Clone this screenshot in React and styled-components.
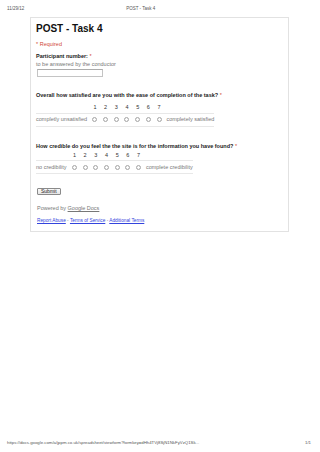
import React from "react";
import styled, { createGlobalStyle } from "styled-components";

const GlobalStyle = createGlobalStyle`
  html, body {
    margin: 0;
    padding: 0;
    background: #fff;
  }
  body {
    font-family: "Liberation Sans", Arial, sans-serif;
  }
`;

const Page = styled.div`
  width: 320px;
  height: 452px;
  display: flex;
  flex-direction: column;
  background: #fff;
  overflow: hidden;
`;

const PrintBar = styled.div`
  display: flex;
  align-items: center;
  height: 17px;
  padding: 0 7px;
  font-size: 4.5px;
  color: #555;
  white-space: nowrap;
`;

const PrintTitle = styled.span`
  margin-left: 102px;
`;

const PrintFooter = styled.div`
  margin-top: auto;
  display: flex;
  justify-content: space-between;
  align-items: center;
  height: 8px;
  padding: 0 9px 6px 7px;
  font-size: 4.3px;
  color: #555;
  white-space: nowrap;
`;

const Card = styled.div`
  box-sizing: border-box;
  width: 259px;
  margin-left: 30px;
  border: 1px solid #e2e2e2;
  padding: 5px 5px 7px 5px;
  color: #222;
  font-size: 5.5px;
  line-height: 7px;
`;

const Title = styled.h1`
  margin: 0;
  font-size: 10px;
  line-height: 12px;
  font-weight: bold;
  color: #111;
`;

const Required = styled.div`
  margin-top: 6px;
  color: #d14836;
`;

const Star = styled.span`
  color: #d14836;
  font-weight: normal;
`;

const Label = styled.div`
  margin-top: ${(p) => p.$top || 0}px;
  font-weight: bold;
  color: #222;
  white-space: nowrap;
`;

const Help = styled.div`
  margin-top: 1px;
  color: #777;
`;

const TextBox = styled.div`
  box-sizing: border-box;
  width: 66px;
  height: 8px;
  margin: 1px 0 0 1px;
  border: 1px solid #c4c4c4;
  border-top-color: #acacac;
`;

const Scale = styled.table`
  margin-top: ${(p) => p.$top}px;
  border-collapse: collapse;
  font-size: 5.5px;
  line-height: 7px;
  color: #777;
  white-space: nowrap;
`;

const NumberCell = styled.th`
  width: 10.7px;
  padding: 0 0 1.5px 0;
  text-align: center;
  font-weight: normal;
  color: #333;
`;

const RowCell = styled.td`
  height: 12px;
  padding: 0;
  border-top: 1px solid #e8e8e8;
  border-bottom: 1px solid #e8e8e8;
  vertical-align: middle;
  text-align: ${(p) => p.$align || "left"};
  padding-left: ${(p) => p.$padLeft || 0}px;
  padding-right: ${(p) => p.$padRight || 0}px;
`;

const Radio = styled.span`
  display: inline-block;
  box-sizing: border-box;
  width: 5px;
  height: 5px;
  border-radius: 50%;
  border: 0.7px solid #a8a8a8;
  background: radial-gradient(circle, #ffffff 0 45%, #e6e6e6 60%, #f6f6f6 80%);
  vertical-align: middle;
`;

const SubmitButton = styled.button`
  display: block;
  box-sizing: border-box;
  height: 7px;
  margin: 14px 0 0 1px;
  padding: 0 3px;
  border: 1px solid #8a8a8a;
  border-radius: 1px;
  background: linear-gradient(#fafafa, #e4e4e4);
  font-family: "Liberation Sans", Arial, sans-serif;
  font-size: 5px;
  line-height: 5px;
  color: #222;
`;

const Powered = styled.div`
  margin: 10px 0 0 1px;
  color: #777;
`;

const GreyLink = styled.a`
  color: #777;
  text-decoration: underline;
`;

const Links = styled.div`
  margin: 5px 0 0 1px;
  font-size: 4.75px;
  color: #777;
  white-space: nowrap;
`;

const BlueLink = styled.a`
  color: #3344dd;
  text-decoration: underline;
`;

const steps = [1, 2, 3, 4, 5, 6, 7];

const ScaleQuestion = ({ question, low, high, titleTop, numbersTop }) => (
  <>
    <Label $top={titleTop}>
      {question} <Star>*</Star>
    </Label>
    <Scale $top={numbersTop}>
      <thead>
        <tr>
          <th />
          {steps.map((n) => (
            <NumberCell key={n}>{n}</NumberCell>
          ))}
          <th />
        </tr>
      </thead>
      <tbody>
        <tr>
          <RowCell $padRight={2.5}>{low}</RowCell>
          {steps.map((n) => (
            <RowCell key={n} $align="center">
              <Radio />
            </RowCell>
          ))}
          <RowCell $padLeft={2}>{high}</RowCell>
        </tr>
      </tbody>
    </Scale>
  </>
);

const App = () => {
  return (
    <Page>
      <GlobalStyle />
      <PrintBar>
        <span>11/29/12</span>
        <PrintTitle>POST - Task 4</PrintTitle>
      </PrintBar>
      <Card>
        <Title>POST - Task 4</Title>
        <Required>* Required</Required>
        <Label $top={5}>
          Participant number: <Star>*</Star>
        </Label>
        <Help>to be answered by the conductor</Help>
        <TextBox />
        <ScaleQuestion
          question="Overall how satisfied are you with the ease of completion of the task?"
          low="completly unsatisfied"
          high="completely satisfied"
          titleTop={15}
          numbersTop={5}
        />
        <ScaleQuestion
          question="How credible do you feel the the site is for the information you have found?"
          low="no credibility"
          high="complete credibility"
          titleTop={16}
          numbersTop={2}
        />
        <SubmitButton>Submit</SubmitButton>
        <Powered>
          Powered by <GreyLink>Google Docs</GreyLink>
        </Powered>
        <Links>
          <BlueLink>Report Abuse</BlueLink> - <BlueLink>Terms of Service</BlueLink> -{" "}
          <BlueLink>Additional Terms</BlueLink>
        </Links>
      </Card>
      <PrintFooter>
        <span>
          https://docs.google.com/a/jppm.co.uk/spreadsheet/viewform?formkey=dHh4TVj8SjN1NkFyVzQ1Sk...
        </span>
        <span>1/1</span>
      </PrintFooter>
    </Page>
  );
};

export default App;
